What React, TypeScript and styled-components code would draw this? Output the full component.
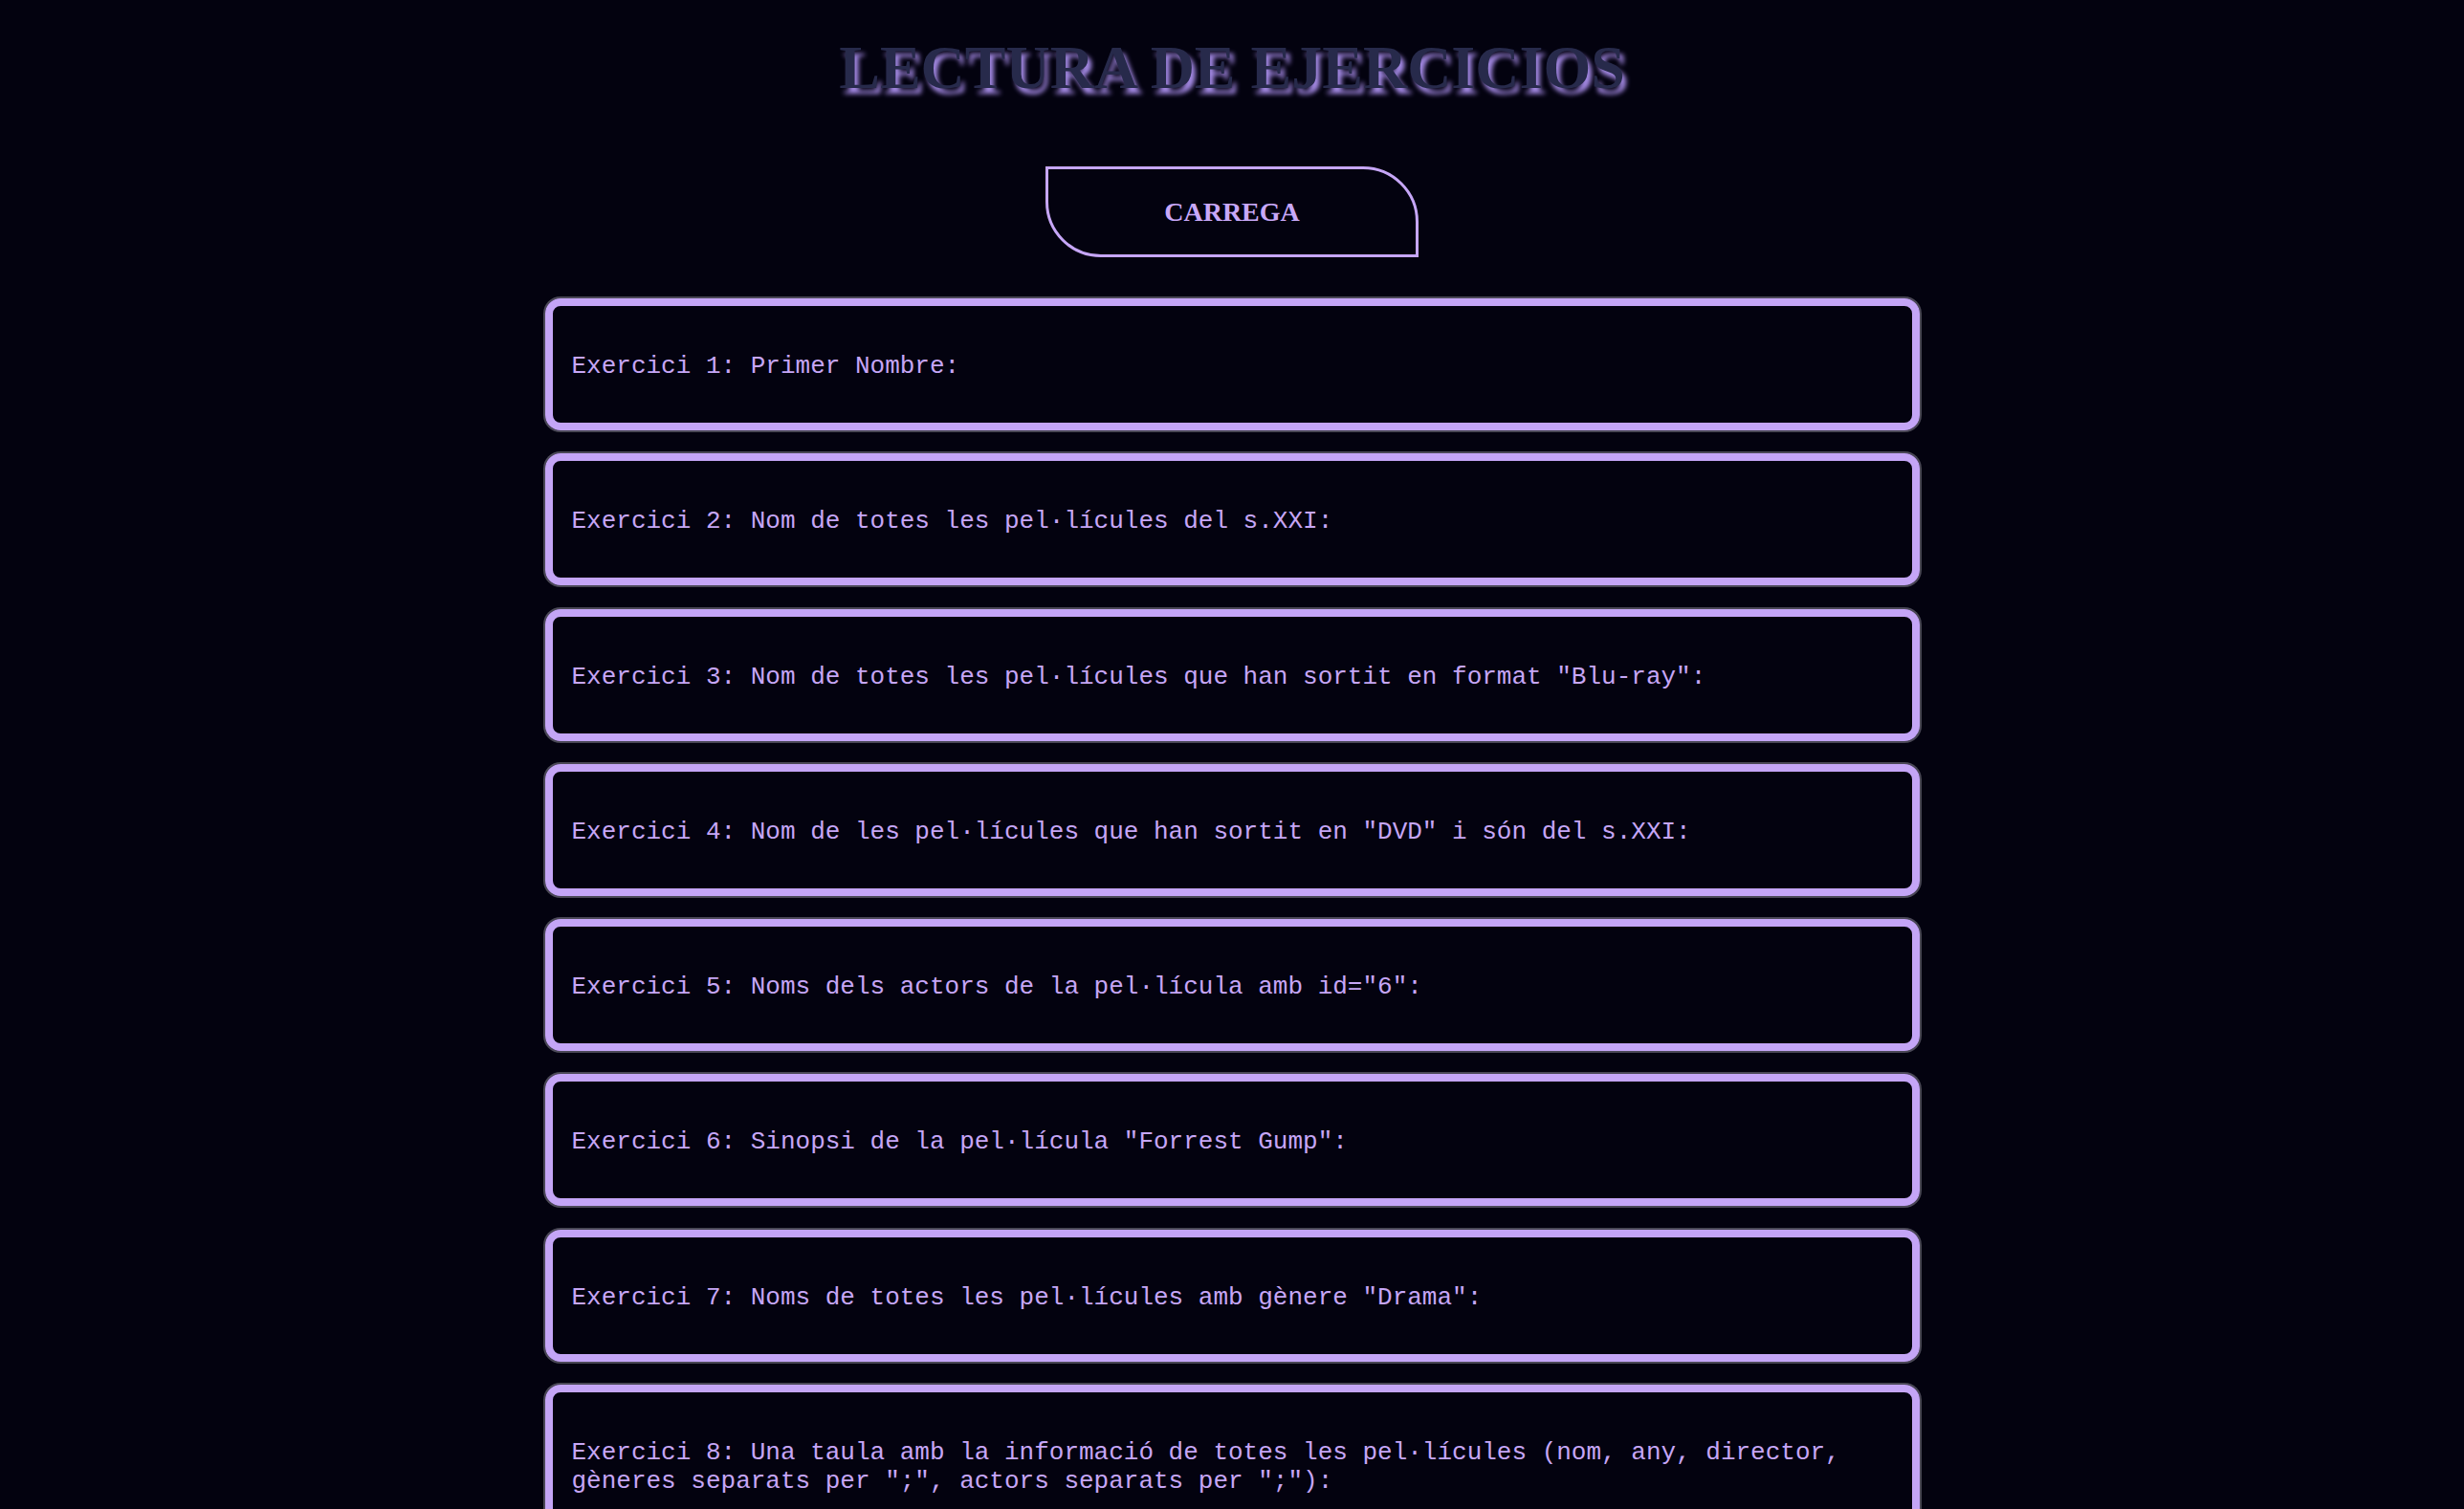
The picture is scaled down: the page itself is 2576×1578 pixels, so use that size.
import styled, { createGlobalStyle } from "styled-components";

const GlobalStyle = createGlobalStyle`
  html, body {
    margin: 0;
    padding: 0;
    background-color: #03020f;
  }
  body {
    font-family: "Liberation Serif", "Times New Roman", serif;
  }
`;

const Page = styled.main`
  min-height: 1578px;
  display: flex;
  flex-direction: column;
  align-items: center;
  padding-top: 34px;
  box-sizing: border-box;
`;

const Title = styled.h1`
  margin: 0;
  font-family: "Liberation Serif", "Times New Roman", serif;
  font-size: 64px;
  font-weight: bold;
  color: #272a4b;
  text-shadow: 4px 6px 5px #a58ae6;
`;

const LoadButton = styled.button`
  margin-top: 66px;
  width: 390px;
  height: 95px;
  background: transparent;
  border: 3px solid #c6a6f7;
  border-radius: 0 58px 0 58px;
  color: #c8a8f8;
  font-family: "Liberation Serif", "Times New Roman", serif;
  font-size: 28px;
  font-weight: bold;
  cursor: pointer;
`;

const List = styled.section`
  margin-top: 43px;
  width: 1437px;
  display: flex;
  flex-direction: column;
  gap: 24.3px;
`;

const Card = styled.div`
  border: 8px solid #c4a5f6;
  border-radius: 16px;
  box-shadow: 0 0 0 2px #4a4856;
  padding: 22px 20px 18px;
  p {
    margin: 26px 0;
    font-family: "Liberation Mono", "Courier New", monospace;
    font-size: 26px;
    color: #c6a6f6;
  }
`;

const exercises = [
  "Exercici 1: Primer Nombre:",
  "Exercici 2: Nom de totes les pel·lícules del s.XXI:",
  'Exercici 3: Nom de totes les pel·lícules que han sortit en format "Blu-ray":',
  'Exercici 4: Nom de les pel·lícules que han sortit en "DVD" i són del s.XXI:',
  'Exercici 5: Noms dels actors de la pel·lícula amb id="6":',
  'Exercici 6: Sinopsi de la pel·lícula "Forrest Gump":',
  'Exercici 7: Noms de totes les pel·lícules amb gènere "Drama":',
  'Exercici 8: Una taula amb la informació de totes les pel·lícules (nom, any, director, gèneres separats per ";", actors separats per ";"):',
];

const App = () => {
  return (
    <>
      <GlobalStyle />
      <Page>
        <Title>LECTURA DE EJERCICIOS</Title>
        <LoadButton>CARREGA</LoadButton>
        <List>
          {exercises.map((text) => (
            <Card key={text}>
              <p>{text}</p>
            </Card>
          ))}
        </List>
      </Page>
    </>
  );
};

export default App;
